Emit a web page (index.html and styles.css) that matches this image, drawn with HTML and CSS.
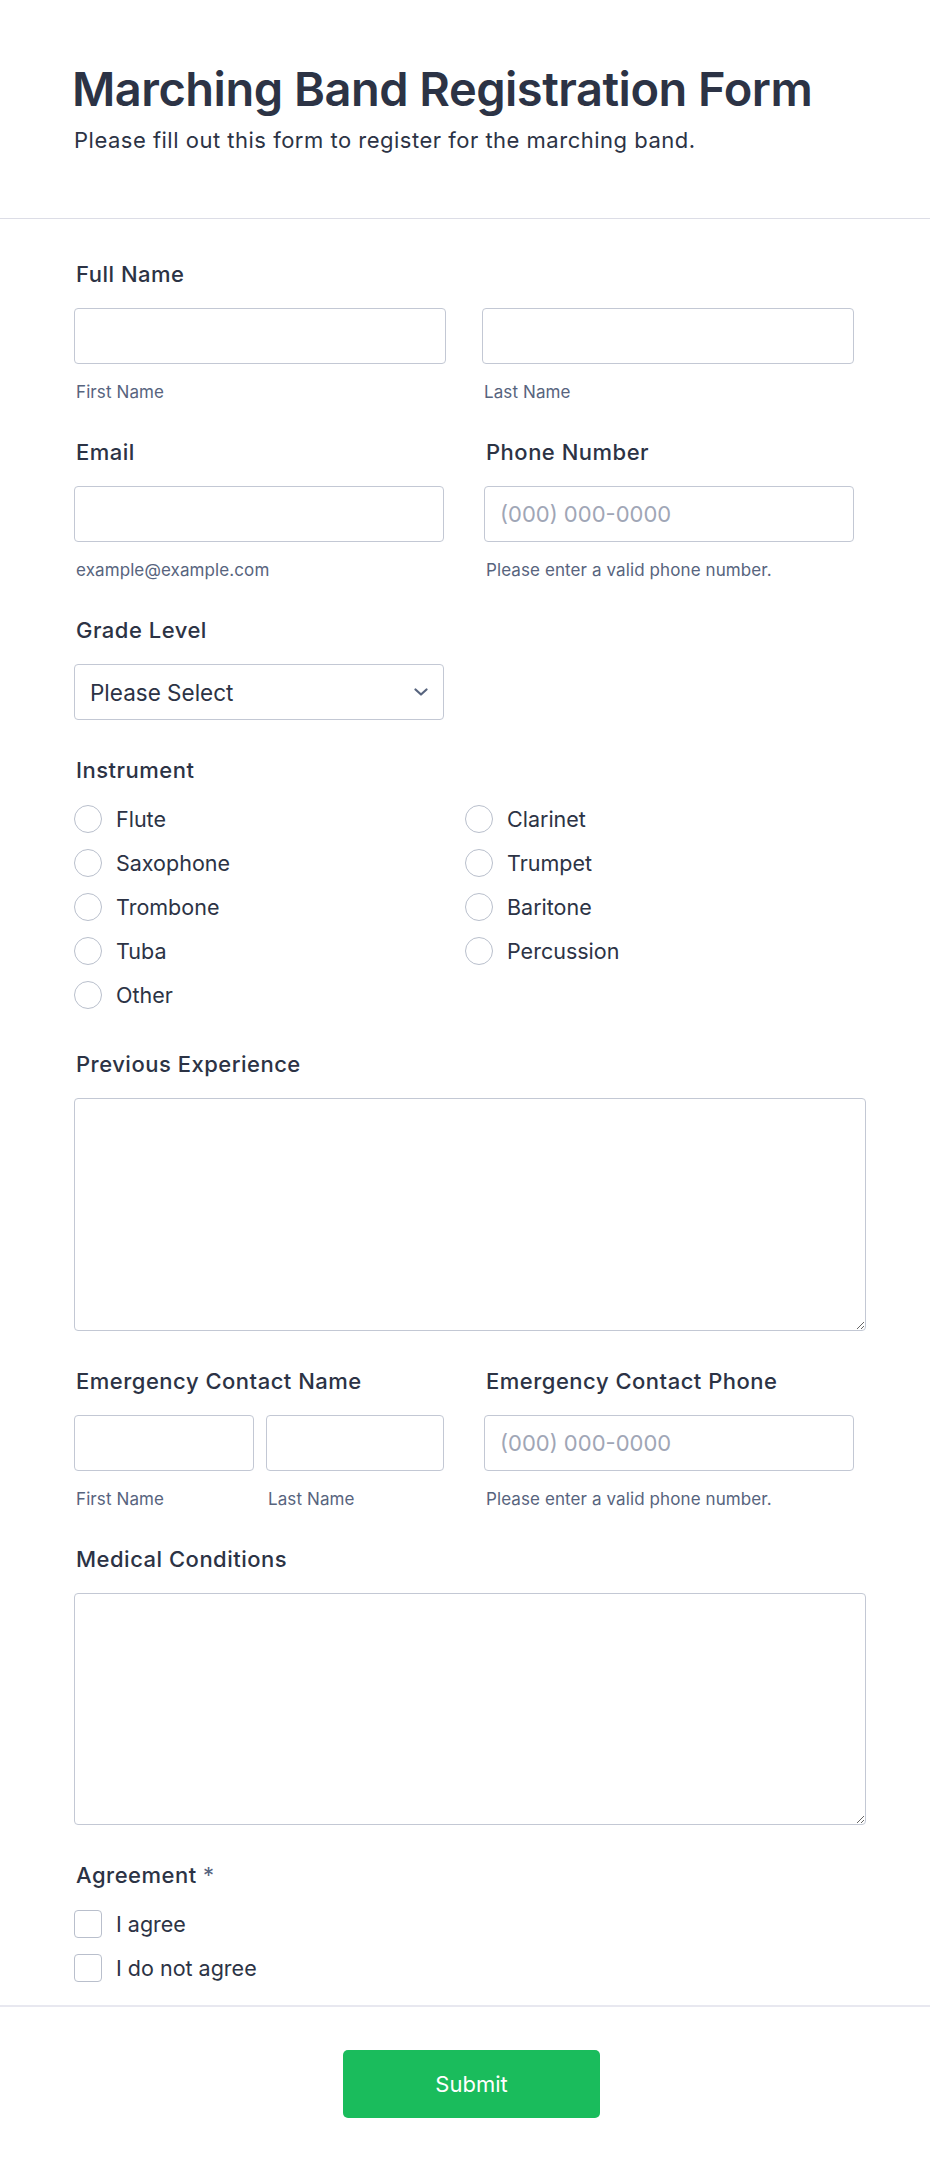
FILE: index.html
```html
<!DOCTYPE html>
<html lang="en">
<head>
<meta charset="utf-8">
<title>Marching Band Registration Form</title>
<link rel="stylesheet" href="styles.css">
</head>
<body>
<header class="form-header">
  <h1 class="form-title">Marching Band Registration Form</h1>
  <p class="form-subtitle">Please fill out this form to register for the marching band.</p>
</header>

<form class="form-body">
  <div class="field">
    <label class="field-label">Full Name</label>
    <div class="name-grid">
      <div class="sub-field">
        <input class="text-input" type="text">
        <span class="sublabel">First Name</span>
      </div>
      <div class="sub-field">
        <input class="text-input" type="text">
        <span class="sublabel">Last Name</span>
      </div>
    </div>
  </div>

  <div class="two-col">
    <div class="field">
      <label class="field-label">Email</label>
      <input class="text-input" type="email">
      <span class="sublabel">example@example.com</span>
    </div>
    <div class="field">
      <label class="field-label">Phone Number</label>
      <input class="text-input" type="tel" placeholder="(000) 000-0000">
      <span class="sublabel">Please enter a valid phone number.</span>
    </div>
  </div>

  <div class="two-col">
    <div class="field">
      <label class="field-label">Grade Level</label>
      <div class="select-box">
        <span>Please Select</span>
        <svg class="chevron" width="14" height="8" viewBox="0 0 14 8"><path d="M1.5 1.5 L7 6.5 L12.5 1.5" fill="none" stroke="#57647e" stroke-width="2.2" stroke-linecap="round" stroke-linejoin="round"/></svg>
      </div>
    </div>
  </div>

  <div class="field">
    <label class="field-label">Instrument</label>
    <div class="option-grid radio-list">
      <label class="option"><input type="radio" name="inst" class="radio"><span>Flute</span></label>
      <label class="option"><input type="radio" name="inst" class="radio"><span>Clarinet</span></label>
      <label class="option"><input type="radio" name="inst" class="radio"><span>Saxophone</span></label>
      <label class="option"><input type="radio" name="inst" class="radio"><span>Trumpet</span></label>
      <label class="option"><input type="radio" name="inst" class="radio"><span>Trombone</span></label>
      <label class="option"><input type="radio" name="inst" class="radio"><span>Baritone</span></label>
      <label class="option"><input type="radio" name="inst" class="radio"><span>Tuba</span></label>
      <label class="option"><input type="radio" name="inst" class="radio"><span>Percussion</span></label>
      <label class="option"><input type="radio" name="inst" class="radio"><span>Other</span></label>
    </div>
  </div>

  <div class="field">
    <label class="field-label">Previous Experience</label>
    <textarea class="text-area"></textarea>
  </div>

  <div class="two-col">
    <div class="field">
      <label class="field-label">Emergency Contact Name</label>
      <div class="pair-grid">
        <div class="sub-field">
          <input class="text-input" type="text">
          <span class="sublabel">First Name</span>
        </div>
        <div class="sub-field">
          <input class="text-input" type="text">
          <span class="sublabel">Last Name</span>
        </div>
      </div>
    </div>
    <div class="field">
      <label class="field-label">Emergency Contact Phone</label>
      <input class="text-input" type="tel" placeholder="(000) 000-0000">
      <span class="sublabel">Please enter a valid phone number.</span>
    </div>
  </div>

  <div class="field">
    <label class="field-label">Medical Conditions</label>
    <textarea class="text-area text-area-short"></textarea>
  </div>

  <div class="field field-last">
    <label class="field-label">Agreement <span class="required">*</span></label>
    <div class="option-list">
      <label class="option"><input type="checkbox" class="checkbox"><span>I agree</span></label>
      <label class="option"><input type="checkbox" class="checkbox"><span>I do not agree</span></label>
    </div>
  </div>
</form>

<footer class="form-footer">
  <button class="submit-btn" type="button">Submit</button>
</footer>
</body>
</html>
```
FILE: styles.css
```css
* {
  box-sizing: border-box;
}

html, body {
  margin: 0;
  padding: 0;
  background: #ffffff;
}

body {
  font-family: Inter, "Noto Sans", "Liberation Sans", sans-serif;
  color: #2c3345;
}

.form-header {
  padding: 60px 72px 64px 72px;
  border-bottom: 1px solid #dcdde6;
}

.form-title {
  margin: 0;
  font-size: 47px;
  line-height: 58px;
  font-weight: 600;
  letter-spacing: -0.5px;
  color: #2c3345;
}

.form-subtitle {
  margin: 8px 0 0 2px;
  font-size: 22px;
  line-height: 28px;
  font-weight: 400;
  letter-spacing: 0.5px;
  color: #2c3345;
}

.form-body {
  padding: 41px 64px 23px 74px;
  display: flex;
  flex-direction: column;
  gap: 36px;
}

.field {
  display: flex;
  flex-direction: column;
}

.field-label {
  display: block;
  padding-left: 2px;
  font-size: 22px;
  line-height: 28px;
  font-weight: 500;
  letter-spacing: 0.5px;
  color: #2c3345;
  margin-bottom: 20px;
}

.required {
  color: #57647e;
  font-weight: 400;
}

.two-col {
  display: grid;
  grid-template-columns: 370px 370px;
  column-gap: 40px;
}

.name-grid {
  display: grid;
  grid-template-columns: 372px 372px;
  column-gap: 36px;
}

.pair-grid {
  display: grid;
  grid-template-columns: 180px 178px;
  column-gap: 12px;
}

.sub-field {
  display: flex;
  flex-direction: column;
}

.text-input {
  width: 100%;
  height: 56px;
  margin: 0;
  padding: 0 15px;
  border: 1px solid #c3c8d4;
  border-radius: 4px;
  font-family: inherit;
  font-size: 22px;
  color: #2c3345;
  background: #fff;
  outline: none;
}

.text-input::placeholder {
  color: #a0a6b6;
}

.sublabel {
  display: block;
  margin-top: 18px;
  padding-left: 2px;
  font-size: 17px;
  line-height: 20px;
  letter-spacing: 0.1px;
  color: #57647e;
}

.select-box {
  height: 56px;
  border: 1px solid #c3c8d4;
  border-radius: 4px;
  display: flex;
  align-items: center;
  justify-content: space-between;
  padding: 0 15px 0 15px;
  font-size: 22.5px;
  color: #2c3345;
  background: #fff;
}

.chevron {
  display: block;
}

.option-grid {
  display: grid;
  grid-template-columns: 391px 1fr;
  row-gap: 16px;
}

.radio-list {
  padding-bottom: 5px;
}

.option-list {
  display: flex;
  flex-direction: column;
  gap: 16px;
}

.field-label + .option-grid,
.field-label + .option-list {
  margin-top: 1px;
}

.option {
  display: flex;
  align-items: center;
  height: 28px;
  font-size: 21.5px;
  color: #2c3345;
}

.option span {
  margin-left: 14px;
}

.radio,
.checkbox {
  appearance: none;
  -webkit-appearance: none;
  width: 28px;
  height: 28px;
  margin: 0;
  border: 1px solid #b9bfcc;
  background: #fff;
  flex: none;
}

.radio {
  border-radius: 50%;
}

.checkbox {
  border-radius: 4px;
}

.text-area {
  display: block;
  width: 792px;
  height: 233px;
  margin: 0;
  border: 1px solid #c3c8d4;
  border-radius: 4px;
  font-family: inherit;
  font-size: 21px;
  resize: both;
  outline: none;
}

.text-area-short {
  height: 232px;
}

.form-footer {
  border-top: 2px solid #e8e8f0;
  padding: 43px 61px 57px 74px;
  display: flex;
  justify-content: center;
}

.submit-btn {
  width: 257px;
  height: 68px;
  border: none;
  border-radius: 5px;
  background: #1abc5c;
  color: #ffffff;
  font-family: inherit;
  font-size: 22px;
  font-weight: 400;
}
```
